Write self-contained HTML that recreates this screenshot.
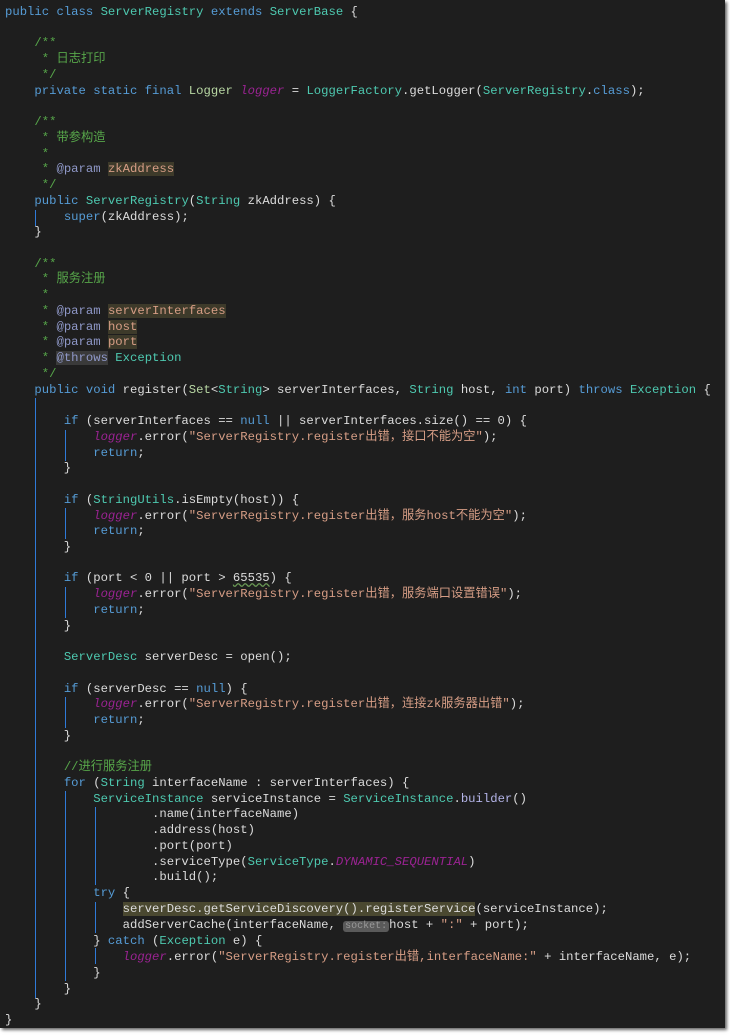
<!DOCTYPE html>
<html><head><meta charset="utf-8"><style>
html,body{margin:0;padding:0;background:#fff;width:730px;height:1035px;overflow:hidden}
#ed{position:absolute;left:0;top:0;width:725px;height:1028px;background:#1e1e1e;box-shadow:2px 2px 3px #666}
pre{margin:0;position:absolute;left:5px;top:5px;font-family:"Liberation Mono","Noto Sans CJK SC",monospace;font-size:12.25px;line-height:15.73px;color:#dcdcdc}
.k{color:#569cd6}.t{color:#4ec9b0}.c{color:#57a64a}.s{color:#d69d85}.l{color:#9b2393;font-style:italic}
.i{color:#b8d7a3}.d{color:#8f98c8}.m{color:#b4b4e8}
.h{background:#3d3a2a}.hc{color:#d69d85;background:#3d3a2a}
.hl{background:#4a4830}.th{background:#3a3a3a}
.hint{background:#5a5a5a;color:#999;font-size:10px;border-radius:3px;padding:0 2px}
.g{position:absolute;width:1px;background:#2f7ad8}
.w{text-decoration:underline wavy #6a9955}
</style></head><body><div id="ed">
<div class="g" style="left:35px;top:398px;height:600px"></div>
<div class="g" style="left:35px;top:210px;height:16px"></div>
<div class="g" style="left:65px;top:430px;height:31px"></div>
<div class="g" style="left:65px;top:508px;height:31px"></div>
<div class="g" style="left:65px;top:587px;height:31px"></div>
<div class="g" style="left:65px;top:697px;height:31px"></div>
<div class="g" style="left:65px;top:791px;height:190px"></div>
<div class="g" style="left:95px;top:807px;height:78px"></div>
<div class="g" style="left:95px;top:902px;height:31px"></div>
<div class="g" style="left:95px;top:948px;height:16px"></div>
<pre><span class="k">public class</span> <span class="t">ServerRegistry</span> <span class="k">extends</span> <span class="t">ServerBase</span> {

    <span class="c">/**</span>
<span class="c">     * 日志打印</span>
<span class="c">     */</span>
    <span class="k">private static final</span> <span class="i">Logger</span> <span class="l">logger</span> = <span class="t">LoggerFactory</span>.getLogger(<span class="t">ServerRegistry</span>.<span class="k">class</span>);

    <span class="c">/**</span>
<span class="c">     * 带参构造</span>
<span class="c">     *</span>
<span class="c">     * </span><span class="d">@param</span> <span class="hc">zkAddress</span>
<span class="c">     */</span>
    <span class="k">public</span> <span class="t">ServerRegistry</span>(<span class="t">String</span> zkAddress) {
        <span class="k">super</span>(zkAddress);
    }

    <span class="c">/**</span>
<span class="c">     * 服务注册</span>
<span class="c">     *</span>
<span class="c">     * </span><span class="d">@param</span> <span class="hc">serverInterfaces</span>
<span class="c">     * </span><span class="d">@param</span> <span class="hc">host</span>
<span class="c">     * </span><span class="d">@param</span> <span class="hc">port</span>
<span class="c">     * </span><span class="d th">@throws</span> <span class="t">Exception</span>
<span class="c">     */</span>
    <span class="k">public void</span> register(<span class="i">Set</span>&lt;<span class="t">String</span>&gt; serverInterfaces, <span class="t">String</span> host, <span class="k">int</span> port) <span class="k">throws</span> <span class="t">Exception</span> {

        <span class="k">if</span> (serverInterfaces == <span class="k">null</span> || serverInterfaces.size() == 0) {
            <span class="l">logger</span>.error(<span class="s">"ServerRegistry.register出错，接口不能为空"</span>);
            <span class="k">return</span>;
        }

        <span class="k">if</span> (<span class="t">StringUtils</span>.isEmpty(host)) {
            <span class="l">logger</span>.error(<span class="s">"ServerRegistry.register出错，服务host不能为空"</span>);
            <span class="k">return</span>;
        }

        <span class="k">if</span> (port &lt; 0 || port &gt; <span class="w">65535</span>) {
            <span class="l">logger</span>.error(<span class="s">"ServerRegistry.register出错，服务端口设置错误"</span>);
            <span class="k">return</span>;
        }

        <span class="t">ServerDesc</span> serverDesc = open();

        <span class="k">if</span> (serverDesc == <span class="k">null</span>) {
            <span class="l">logger</span>.error(<span class="s">"ServerRegistry.register出错，连接zk服务器出错"</span>);
            <span class="k">return</span>;
        }

        <span class="c">//进行服务注册</span>
        <span class="k">for</span> (<span class="t">String</span> interfaceName : serverInterfaces) {
            <span class="t">ServiceInstance</span> serviceInstance = <span class="t">ServiceInstance</span>.<span class="m">builder</span>()
                    .name(interfaceName)
                    .address(host)
                    .port(port)
                    .serviceType(<span class="t">ServiceType</span>.<span class="l">DYNAMIC_SEQUENTIAL</span>)
                    .build();
            <span class="k">try</span> {
                <span class="hl">serverDesc.getServiceDiscovery().registerService</span>(serviceInstance);
                addServerCache(interfaceName, <span class="hint">socket:</span>host + <span class="s">":"</span> + port);
            } <span class="k">catch</span> (<span class="t">Exception</span> e) {
                <span class="l">logger</span>.error(<span class="s">"ServerRegistry.register出错,interfaceName:"</span> + interfaceName, e);
            }
        }
    }
}</pre>
</div></body></html>
